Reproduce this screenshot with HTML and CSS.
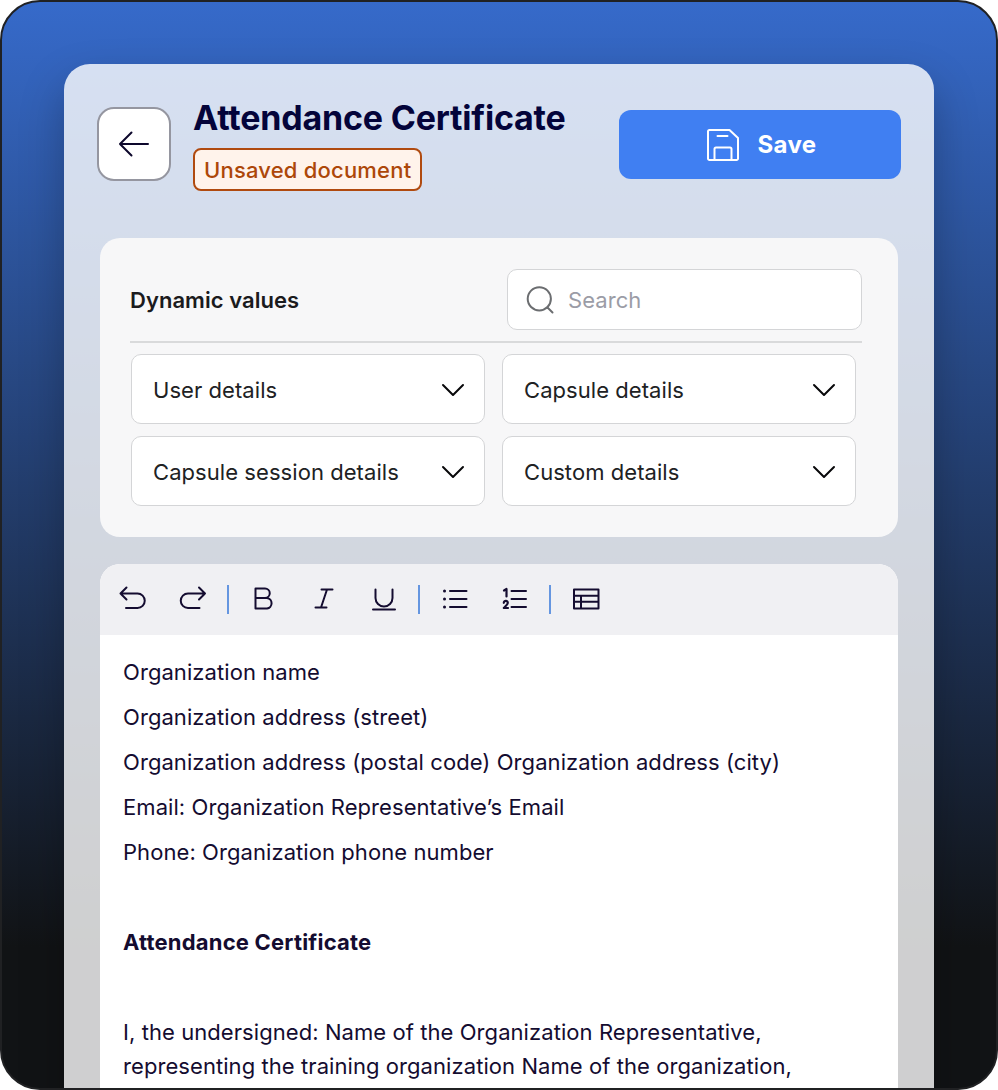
FILE: index.html
```html
<!DOCTYPE html>
<html lang="en">
<head>
  <meta charset="UTF-8">
  <title>Attendance Certificate</title>
  <link rel="stylesheet" href="styles.css">
</head>
<body>
  <div class="frame">
    <main class="window">
      <header class="header">
        <button class="back-btn" aria-label="Back">
          <svg width="32" height="28" viewBox="0 0 32 28"><path d="M30 14H2M13.500 2.500L2 14l11.500 11.500"/></svg>
        </button>
        <div class="header-text">
          <h1>Attendance Certificate</h1>
          <span class="badge">Unsaved document</span>
        </div>
        <button class="save-btn">
          <svg width="32" height="32" viewBox="0 0 32 32"><path d="M2.500 1H22.500L31 9v20.500a1.500 1.500 0 0 1-1.500 1.500h-27A1.500 1.500 0 0 1 1 29.500v-27A1.500 1.500 0 0 1 2.500 1zM7.500 31V20A1.500 1.500 0 0 1 9 18.500H23a1.500 1.500 0 0 1 1.500 1.500V31M10.500 7H20.500"/></svg>
          <span>Save</span>
        </button>
      </header>

      <section class="values">
        <div class="values-top">
          <h2>Dynamic values</h2>
          <label class="search">
            <svg width="28" height="28" viewBox="0 0 28 28"><circle cx="13.300" cy="12.800" r="11.600"/><path d="M21.500 21.500l5 5"/></svg>
            <input type="text" placeholder="Search">
          </label>
        </div>
        <div class="values-grid">
          <div class="select"><span>User details</span><svg width="24" height="14" viewBox="0 0 24 14"><path d="M2 2l10 10L22 2"/></svg></div>
          <div class="select"><span>Capsule details</span><svg width="24" height="14" viewBox="0 0 24 14"><path d="M2 2l10 10L22 2"/></svg></div>
          <div class="select"><span>Capsule session details</span><svg width="24" height="14" viewBox="0 0 24 14"><path d="M2 2l10 10L22 2"/></svg></div>
          <div class="select"><span>Custom details</span><svg width="24" height="14" viewBox="0 0 24 14"><path d="M2 2l10 10L22 2"/></svg></div>
        </div>
      </section>

      <section class="editor">
        <div class="toolbar">
          <svg class="tool" viewBox="0 0 30 30"><path d="M8.500 3.500L2.500 9.500 8.500 15.500M2.500 9.500H19.500a7 7 0 0 1 0 14.500H8"/></svg>
          <svg class="tool" viewBox="0 0 30 30"><path d="M21 3.500l6 6L21 15.500M27 9.500H10a7 7 0 0 0 0 14.500H21.500"/></svg>
          <i class="divider"></i>
          <svg class="tool" viewBox="0 0 30 30"><path d="M6.500 4.500H16a4.700 4.700 0 0 1 0 9.500H6.500zM6.500 14H18a5.300 5.300 0 0 1 0 10.500H6.500z"/></svg>
          <svg class="tool" viewBox="0 0 30 30"><path d="M12.500 5.500H23.500M6.500 23.500H17.500M18 5.500l-6 18"/></svg>
          <svg class="tool" viewBox="0 0 30 30"><path d="M6.500 5.500V14a8.500 8.500 0 0 0 17 0V5.500M4 25.500H26"/></svg>
          <i class="divider"></i>
          <svg class="tool" viewBox="0 0 30 30"><path d="M10 7H26.500M10 15H26.500M10 23H26.500"/><path class="dots" d="M4.500 7h.01M4.500 15h.01M4.500 23h.01"/></svg>
          <svg class="tool" viewBox="0 0 30 30"><path d="M11.500 7H26M11.500 15H26M11.500 23H26"/><path class="digits" d="M4 6.500L6.500 5V12.500M3.800 18.800a2 2 0 0 1 4 .2c0 1.500-2.500 3.300-4 5H8"/></svg>
          <i class="divider"></i>
          <svg class="tool" viewBox="0 0 30 30"><path d="M3 5.500H27.500V24.500H3zM3 11.800H27.500M3 17.800H27.500M10 11.800V24.500"/></svg>
        </div>
        <div class="content">
          <p>Organization name</p>
          <p>Organization address (street)</p>
          <p>Organization address (postal code) Organization address (city)</p>
          <p>Email: Organization Representative’s Email</p>
          <p>Phone: Organization phone number</p>
          <h3>Attendance Certificate</h3>
          <p>I, the undersigned: Name of the Organization Representative,<br>representing the training organization Name of the organization,</p>
        </div>
      </section>
    </main>
  </div>
</body>
</html>
```
FILE: styles.css
```css
* {
  box-sizing: border-box;
}

body {
  margin: 0;
  background: #fff;
  font-family: Inter, "Liberation Sans", sans-serif;
}

h1, h2, h3, p {
  margin: 0;
}

svg {
  display: block;
  flex: none;
  fill: none;
  stroke: currentColor;
  stroke-width: 2;
  stroke-linecap: round;
  stroke-linejoin: round;
}

button {
  font-family: inherit;
  cursor: pointer;
}

.frame {
  height: 1090px;
  padding: 62px 62px 0;
  border: 2px solid #202123;
  border-radius: 40px;
  background: linear-gradient(#366aca 0%, #111315 87%);
  overflow: hidden;
}

.window {
  height: 1100px;
  padding: 34px 33px 0;
  border-radius: 26px;
  background: rgba(255, 255, 255, 0.8);
  box-shadow: 0 20px 44px rgba(0, 0, 0, 0.26);
}

.header {
  display: flex;
  align-items: flex-start;
  height: 140px;
}

.back-btn {
  display: flex;
  align-items: center;
  justify-content: center;
  width: 74px;
  height: 74px;
  margin-top: 9px;
  padding: 0;
  border: 2px solid #9596a0;
  border-radius: 17px;
  background: #fff;
  color: #0d082c;
}

.header-text {
  margin-left: 22px;
}

.header-text h1 {
  height: 50px;
  line-height: 40px;
  font-size: 34px;
  font-weight: 700;
  letter-spacing: -0.2px;
  white-space: nowrap;
  color: #04043a;
}

.badge {
  display: inline-block;
  height: 43px;
  padding: 1px 9px 0;
  border: 2px solid #b04a0f;
  border-radius: 8px;
  background: #fff3eb;
  line-height: 39px;
  font-size: 22px;
  font-weight: 500;
  letter-spacing: 0.2px;
  white-space: nowrap;
  color: #ad4709;
}

.save-btn {
  display: flex;
  align-items: center;
  justify-content: center;
  gap: 18px;
  width: 282px;
  height: 69px;
  margin: 12px 0 0 auto;
  padding: 0 0 0 4px;
  border: 0;
  border-radius: 12px;
  background: #407ff2;
  color: #fff;
  font-size: 24px;
  font-weight: 700;
  letter-spacing: 0.4px;
}

.values {
  height: 299px;
  margin: 0 3px;
  padding: 31px 36px 0 30px;
  border-radius: 20px;
  background: #f7f7f8;
}

.values-top {
  display: flex;
  align-items: flex-start;
  justify-content: space-between;
  height: 74px;
  border-bottom: 2px solid #d9dadb;
}

.values-top h2 {
  line-height: 63px;
  font-size: 22px;
  font-weight: 600;
  letter-spacing: 0.05px;
  color: #1b1b1d;
}

.search {
  display: flex;
  align-items: center;
  gap: 14px;
  width: 355px;
  height: 61px;
  padding: 0 18px;
  border: 1px solid #d4d5d7;
  border-radius: 10px;
  background: #fff;
  color: #6b6d70;
}

.search input {
  min-width: 0;
  flex: 1;
  padding: 0;
  border: 0;
  outline: 0;
  background: none;
  font-family: inherit;
  font-size: 22px;
  letter-spacing: 0.05px;
}

.search input::placeholder {
  color: #9b9ca6;
}

.values-grid {
  display: grid;
  grid-template-columns: 354px 354px;
  justify-content: end;
  gap: 12px 17px;
  margin: 11px 6px 0 0;
}

.select {
  display: flex;
  align-items: center;
  justify-content: space-between;
  height: 70px;
  padding: 2px 19px 0 21px;
  border: 1px solid #d4d5d7;
  border-radius: 10px;
  background: #fff;
  font-size: 22px;
  letter-spacing: 0.06px;
  color: #202123;
}

.select svg {
  color: #08080a;
}

.editor {
  height: 560px;
  margin: 27px 3px 0;
  border-radius: 20px 20px 0 0;
  background: #fff;
  overflow: hidden;
}

.toolbar {
  display: flex;
  align-items: center;
  height: 71px;
  padding: 0 0 1px 18px;
  background: #f0f0f3;
  color: #140c30;
}

.tool {
  width: 30px;
  height: 30px;
  margin-right: 30px;
}

.tool:has(+ .divider) {
  margin-right: 19px;
}

.dots {
  stroke-width: 3;
}

.digits {
  stroke-width: 2.2;
}

.divider {
  width: 2px;
  height: 29px;
  margin-right: 20px;
  background: #6596e0;
}

.content {
  padding: 20px 23px 0;
  font-size: 22px;
  line-height: 34px;
  letter-spacing: 0.07px;
  color: #140c30;
}

.content p {
  margin-bottom: 11px;
}

.content h3 {
  margin: 56px 0;
  font-size: 22px;
  font-weight: 700;
  letter-spacing: 0.2px;
}
```
